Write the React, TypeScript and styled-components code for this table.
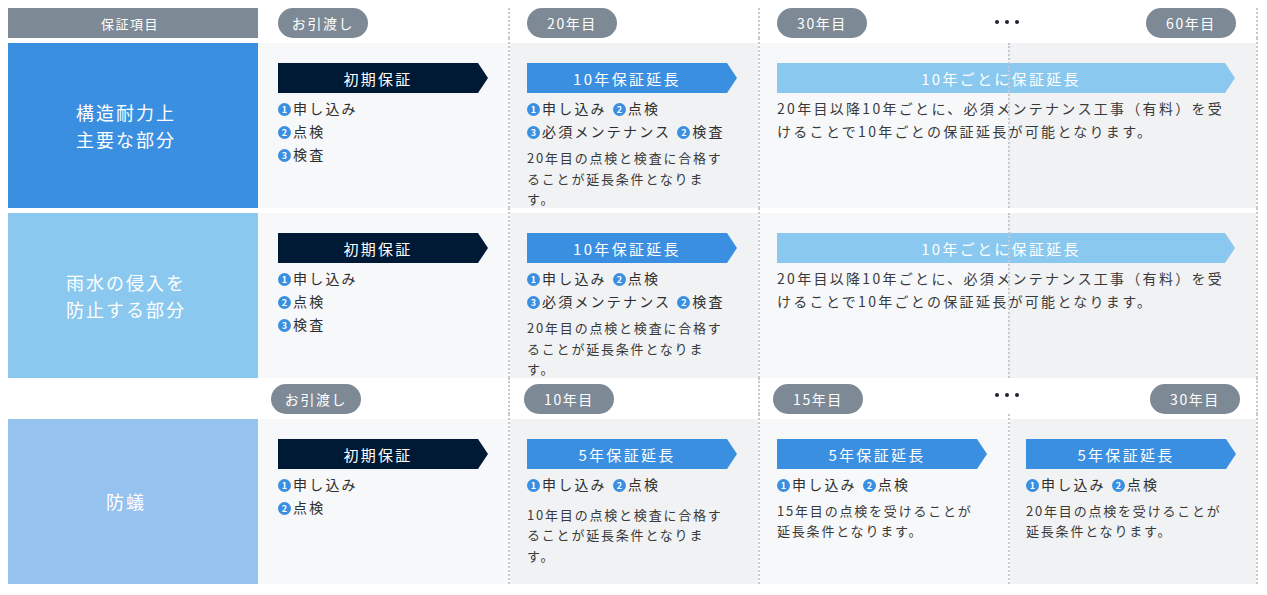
import React from "react";
import styled, { createGlobalStyle } from "styled-components";

const BLUE = "#3b8fe0";
const SKY = "#8ac8ef";
const PALE = "#95c2ee";
const NAVY = "#001a35";
const GRAY = "#7d8995";
const LIGHT = "#f7f8f9";
const SHADE = "#f1f2f4";
const LINE = "2px dotted #c6c9cd";

const GlobalStyle = createGlobalStyle`
  *, *::before, *::after { box-sizing: border-box; }
  body {
    margin: 8px;
    background: #fff;
    font-family: "Noto Sans CJK JP", "Noto Sans", sans-serif;
    color: #333;
  }
`;

const Table = styled.div`
  display: grid;
  grid-template-columns: repeat(5, 250px);
  width: 1250px;
`;

const Cell = styled.div<{ $line?: boolean; $end?: boolean; $span?: number; $gap?: boolean; $mid?: boolean }>`
  position: relative;
  grid-column: span ${(p) => p.$span ?? 1};
  border-left: ${(p) => (p.$line ? LINE : "none")};
  border-right: ${(p) => (p.$end ? LINE : "none")};
  padding-top: ${(p) => (p.$gap ? 5 : 0)}px;

  &::after {
    content: "";
    display: ${(p) => (p.$mid ? "block" : "none")};
    position: absolute;
    top: 5px;
    bottom: 0;
    left: 248px;
    border-left: ${LINE};
  }
`;

const TimeHead = styled(Cell)<{ $h: number; $pl: number; $pr?: number }>`
  height: ${(p) => p.$h}px;
  display: flex;
  align-items: flex-end;
  justify-content: space-between;
  padding-left: ${(p) => p.$pl}px;
  padding-right: ${(p) => p.$pr ?? 0}px;
`;

const HeadBar = styled.div`
  height: 30px;
  background: ${GRAY};
  color: #fff;
  font-size: 13px;
  letter-spacing: 1.5px;
  display: flex;
  align-items: center;
  justify-content: center;
  padding-right: 6px;
`;

const Spacer = styled.div`
  height: 36px;
`;

const Pill = styled.span`
  width: 90px;
  height: 30px;
  border-radius: 15px;
  background: ${GRAY};
  color: #fff;
  font-size: 14px;
  letter-spacing: 1.6px;
  display: flex;
  align-items: center;
  justify-content: center;
`;

const Dots = styled.span`
  align-self: center;
  display: flex;
  gap: 6px;
  margin-bottom: 2px;

  i {
    width: 4px;
    height: 4px;
    border-radius: 50%;
    background: #1d2333;
  }
`;

const Label = styled.div<{ $bg: string }>`
  height: 165px;
  background: ${(p) => p.$bg};
  display: flex;
  align-items: center;
  justify-content: center;
  padding-right: 14px;
  color: #fff;
  font-size: 18px;
  letter-spacing: 2px;
  line-height: 27px;
  text-align: center;
`;

const Panel = styled.div<{ $bg: string; $pl?: number }>`
  height: 165px;
  background: ${(p) => p.$bg};
  padding: 20px 0 0 ${(p) => p.$pl ?? 17}px;
`;

const Arrow = styled.div<{ $bg: string; $w?: number }>`
  width: ${(p) => p.$w ?? 210}px;
  height: 30px;
  background: ${(p) => p.$bg};
  clip-path: polygon(0 0, calc(100% - 10px) 0, 100% 50%, calc(100% - 10px) 100%, 0 100%);
  padding-right: 10px;
  display: flex;
  align-items: center;
  justify-content: center;
  color: #fff;
  font-size: 15px;
  letter-spacing: 2.3px;
`;

const Items = styled.div`
  margin-top: 4px;
  font-size: 14px;
  line-height: 23px;
  letter-spacing: 2.2px;
  color: #2e2e2e;
`;

const Line = styled.div`
  display: flex;
  gap: 6px;
  white-space: nowrap;
`;

const Step = styled.span`
  display: flex;
  align-items: center;
`;

const Num = styled.span`
  display: flex;
  align-items: center;
  justify-content: center;
  width: 13px;
  height: 13px;
  margin: 1px 2px 0 0;
  border-radius: 50%;
  background: ${BLUE};
  color: #fff;
  font-size: 9px;
  font-weight: 700;
  line-height: 1;
  letter-spacing: 0;
`;

const Note = styled.p<{ $mt?: number; $big?: boolean }>`
  margin: ${(p) => p.$mt ?? 5}px 0 0;
  font-size: ${(p) => (p.$big ? 14 : 13)}px;
  line-height: ${(p) => (p.$big ? 23 : 20.5)}px;
  letter-spacing: ${(p) => (p.$big ? 2.3 : 1.8)}px;
  color: #3a3a3a;
  white-space: nowrap;
`;

function Entry({ n, children }: { n: number; children: React.ReactNode }) {
  return (
    <Step>
      <Num>{n}</Num>
      {children}
    </Step>
  );
}

function Initial({ steps }: { steps: string[] }) {
  return (
    <Panel $bg={LIGHT} $pl={20}>
      <Arrow $bg={NAVY}>初期保証</Arrow>
      <Items>
        {steps.map((s, i) => (
          <Line key={s}>
            <Entry n={i + 1}>{s}</Entry>
          </Line>
        ))}
      </Items>
    </Panel>
  );
}

function TenYear() {
  return (
    <Panel $bg={SHADE}>
      <Arrow $bg={BLUE}>10年保証延長</Arrow>
      <Items>
        <Line>
          <Entry n={1}>申し込み</Entry>
          <Entry n={2}>点検</Entry>
        </Line>
        <Line>
          <Entry n={3}>必須メンテナンス</Entry>
          <Entry n={2}>検査</Entry>
        </Line>
      </Items>
      <Note>
        20年目の点検と検査に合格す
        <br />
        ることが延長条件となりま
        <br />
        す。
      </Note>
    </Panel>
  );
}

function EveryTen() {
  return (
    <Panel $bg={`linear-gradient(to right, ${LIGHT} 248px, ${SHADE} 248px)`}>
      <Arrow $bg={SKY} $w={458}>10年ごとに保証延長</Arrow>
      <Note $big $mt={4}>
        20年目以降10年ごとに、必須メンテナンス工事（有料）を受
        <br />
        けることで10年ごとの保証延長が可能となります。
      </Note>
    </Panel>
  );
}

function FiveYear({ bg, year, pl }: { bg: string; year: number; pl?: number }) {
  return (
    <Panel $bg={bg} $pl={pl}>
      <Arrow $bg={BLUE}>5年保証延長</Arrow>
      <Items>
        <Line>
          <Entry n={1}>申し込み</Entry>
          <Entry n={2}>点検</Entry>
        </Line>
      </Items>
      <Note $mt={4.5}>
        {year}年目の点検を受けることが
        <br />
        延長条件となります。
      </Note>
    </Panel>
  );
}

const Trio = () => (
  <Dots>
    <i />
    <i />
    <i />
  </Dots>
);

export default function App() {
  return (
    <>
      <GlobalStyle />
      <Table>
        <HeadBar>保証項目</HeadBar>
        <TimeHead $h={30} $pl={20}>
          <Pill>お引渡し</Pill>
        </TimeHead>
        <TimeHead $h={30} $pl={17} $line>
          <Pill>20年目</Pill>
        </TimeHead>
        <TimeHead $h={30} $pl={17} $pr={20} $line $end $span={2}>
          <Pill>30年目</Pill>
          <Trio />
          <Pill>60年目</Pill>
        </TimeHead>

        <Cell $gap>
          <Label $bg={BLUE}>
            構造耐力上
            <br />
            主要な部分
          </Label>
        </Cell>
        <Cell $gap>
          <Initial steps={["申し込み", "点検", "検査"]} />
        </Cell>
        <Cell $gap $line>
          <TenYear />
        </Cell>
        <Cell $gap $line $end $mid $span={2}>
          <EveryTen />
        </Cell>

        <Cell $gap>
          <Label $bg={SKY}>
            雨水の侵入を
            <br />
            防止する部分
          </Label>
        </Cell>
        <Cell $gap>
          <Initial steps={["申し込み", "点検", "検査"]} />
        </Cell>
        <Cell $gap $line>
          <TenYear />
        </Cell>
        <Cell $gap $line $end $mid $span={2}>
          <EveryTen />
        </Cell>

        <Spacer />
        <TimeHead $h={36} $pl={13}>
          <Pill>お引渡し</Pill>
        </TimeHead>
        <TimeHead $h={36} $pl={14} $line>
          <Pill>10年目</Pill>
        </TimeHead>
        <TimeHead $h={36} $pl={13} $pr={16} $line $end $span={2}>
          <Pill>15年目</Pill>
          <Trio />
          <Pill>30年目</Pill>
        </TimeHead>

        <Cell $gap>
          <Label $bg={PALE}>防蟻</Label>
        </Cell>
        <Cell $gap>
          <Initial steps={["申し込み", "点検"]} />
        </Cell>
        <Cell $gap $line>
          <Panel $bg={SHADE}>
            <Arrow $bg={BLUE}>5年保証延長</Arrow>
            <Items>
              <Line>
                <Entry n={1}>申し込み</Entry>
                <Entry n={2}>点検</Entry>
              </Line>
            </Items>
            <Note $mt={8.5}>
              10年目の点検と検査に合格す
              <br />
              ることが延長条件となりま
              <br />
              す。
            </Note>
          </Panel>
        </Cell>
        <Cell $gap $line>
          <FiveYear bg={LIGHT} year={15} />
        </Cell>
        <Cell $gap $line $end>
          <FiveYear bg={SHADE} year={20} pl={16} />
        </Cell>
      </Table>
    </>
  );
}
